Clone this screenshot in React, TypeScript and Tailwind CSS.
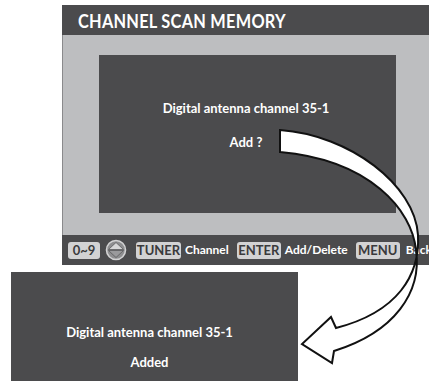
import React from "react";

const Key = ({ children, w }: { children: React.ReactNode; w: string }) => (
  <div
    className={`${w} h-[17px] rounded-[3px] bg-[#d2d2d3] text-[#3a3a3c] text-[13px] font-bold leading-[17px] text-center`}
  >
    {children}
  </div>
);

export default function App() {
  return (
    <div
      className="relative w-[429px] h-[381px] overflow-hidden bg-white"
      style={{ fontFamily: "Lato, 'Open Sans', sans-serif" }}
    >
      <div className="ml-[62px] pt-[5px] w-[371px] flex flex-col">
        <div className="h-[30px] bg-[#4b4b4d] pl-[16px] flex items-center">
          <span className="inline-block origin-left scale-x-[0.86] text-white text-[19px] font-bold tracking-[0.3px] leading-none whitespace-nowrap">
            CHANNEL SCAN MEMORY
          </span>
        </div>
        <div className="h-[200px] bg-[#bdbec0] border-l border-[#8a8a8c] pt-[20px] pl-[36px] pr-[37px]">
          <div className="h-[158px] bg-[#4b4b4d] flex flex-col items-center pt-[45px] pr-[3px]">
            <div className="text-white text-[13px] font-bold leading-[16px]">
              Digital antenna channel 35-1
            </div>
            <div className="text-white text-[13px] font-bold leading-[16px] mt-[18px]">
              Add ?
            </div>
          </div>
        </div>
        <div className="h-[30px] bg-[#4b4b4d] flex items-center pl-[6px] text-white text-[12px] font-bold whitespace-nowrap">
          <Key w="w-[32px]">0~9</Key>
          <svg width="22" height="22" viewBox="0 0 22 22" className="ml-[5px]">
            <circle cx="11" cy="11" r="9.5" fill="#8e8e90" stroke="#d2d2d3" strokeWidth="1.6" />
            <path d="M3.5 10.5 L11 3.5 L18.5 10.5 Z" fill="#d6d6d7" stroke="#5a5a5c" strokeWidth="0.8" />
            <path d="M3.5 11.5 L11 18.5 L18.5 11.5 Z" fill="#9a9a9c" stroke="#5a5a5c" strokeWidth="0.8" />
          </svg>
          <div className="ml-[9px]">
            <Key w="w-[45px]">TUNER</Key>
          </div>
          <span className="ml-[4px]">Channel</span>
          <div className="ml-[8px]">
            <Key w="w-[44px]">ENTER</Key>
          </div>
          <span className="ml-[4px]">Add/Delete</span>
          <div className="ml-[8px]">
            <Key w="w-[44px]">MENU</Key>
          </div>
          <span className="ml-[6px]">Back</span>
        </div>
      </div>
      <div className="mt-[7px] ml-[11px] w-[287px] h-[110px] bg-[#4b4b4d] flex flex-col items-center pt-[52px] pr-[10px]">
        <div className="text-white text-[13px] font-bold leading-[16px]">
          Digital antenna channel 35-1
        </div>
        <div className="text-white text-[13px] font-bold leading-[16px] mt-[14px]">
          Added
        </div>
      </div>
      <svg
        className="absolute left-0 top-0 pointer-events-none"
        width="429"
        height="381"
        viewBox="0 0 429 381"
      >
        <path
          d="M280 130 C350 135 415 185 418 235 C420 275 398 312 336 328 L331 317 L302 344 L332 363 L334 351 C395 332 422 292 416 250 C412 210 370 160 280 152 Z"
          fill="white"
          stroke="#111"
          strokeWidth="2"
          strokeLinejoin="miter"
        />
      </svg>
    </div>
  );
}
